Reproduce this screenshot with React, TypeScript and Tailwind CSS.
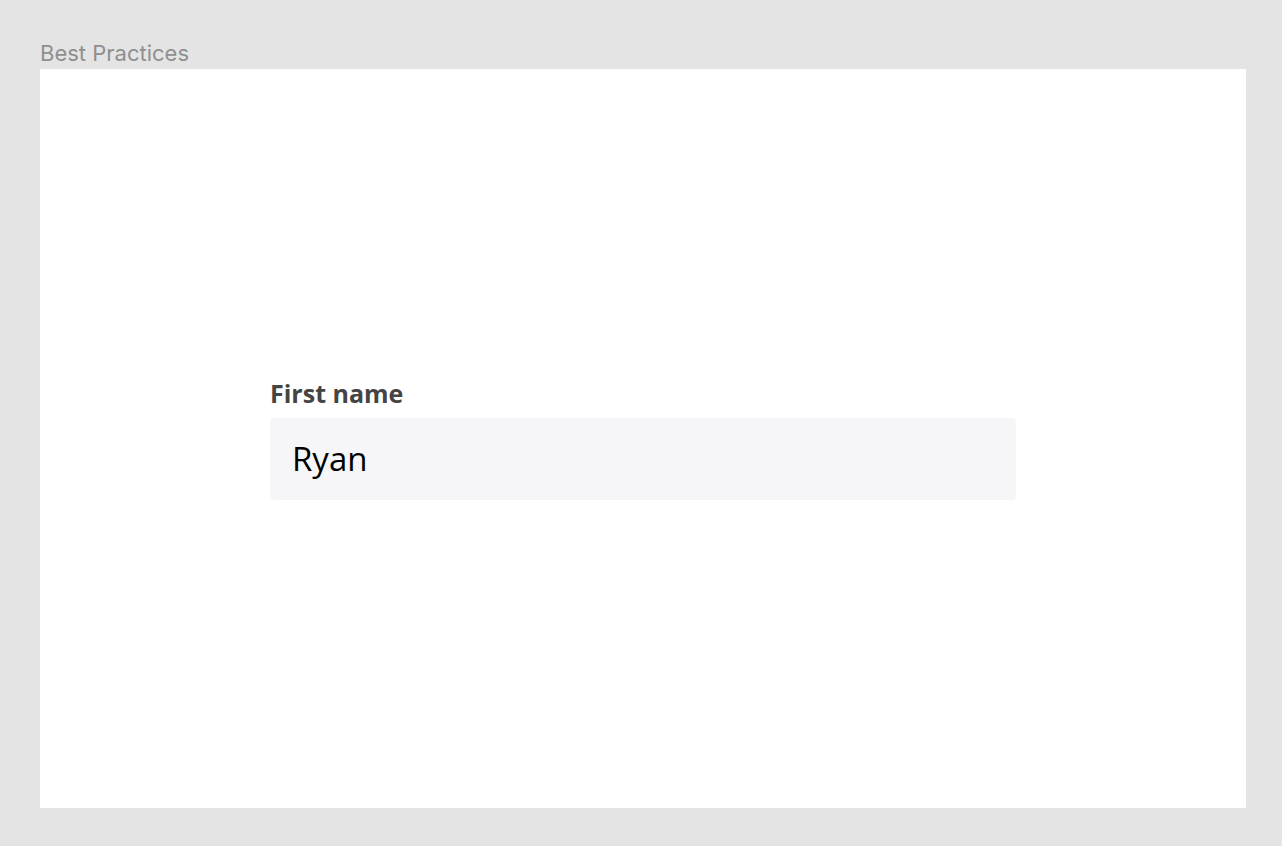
import React from 'react';

export default function App() {
  return (
    <div className="min-h-screen bg-[#e4e4e4] pl-10 pr-9 pt-[38px] pb-[38px] flex flex-col">
      <div className="text-[22px] leading-[31px] text-[#8f8f8f] font-['Inter',sans-serif]">Best Practices</div>
      <div className="bg-white h-[739px] flex items-center justify-center">
        <div className="w-[746px] flex flex-col gap-[10px] font-['Open_Sans',sans-serif]">
          <label className="text-[25px] leading-[30px] font-bold text-[#444444]">First name</label>
          <div className="h-[82px] rounded-[4px] bg-[#f6f6f8] px-[22px] flex items-center text-[33px] text-black">
            Ryan
          </div>
        </div>
      </div>
    </div>
  );
}
